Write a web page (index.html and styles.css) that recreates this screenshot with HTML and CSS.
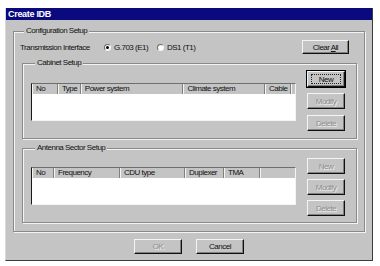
FILE: index.html
```html
<!DOCTYPE html>
<html lang="en">
<head>
  <meta charset="UTF-8" />
  <title>Create IDB</title>
  <link rel="stylesheet" href="styles.css">
</head>
<body>
  <div class="window">
    <div class="titlebar">Create IDB</div>

    <div class="content">
      <fieldset class="group config">
        <legend>Configuration Setup</legend>

        <div class="iface-row">
          <span class="iface-label">Transmission Interface</span>
          <label class="radio-opt"><span class="radio checked"></span>G.703 (E1)</label>
          <label class="radio-opt"><span class="radio"></span>DS1 (T1)</label>
          <button class="btn clear-btn"><span>Clear <u>A</u>ll</span></button>
        </div>

        <fieldset class="group sub cabinet">
          <legend>Cabinet Setup</legend>
          <div class="list">
            <div class="list-head">
              <span class="col" style="width: 26px">No</span>
              <span class="col" style="width: 23px">Type</span>
              <span class="col" style="width: 103px">Power system</span>
              <span class="col" style="width: 82px">Climate system</span>
              <span class="col" style="width: 26px">Cable</span>
              <span class="col fill"></span>
            </div>
          </div>
          <div class="side-btns">
            <button class="btn default"><span class="focus">New</span></button>
            <button class="btn" disabled>Modify</button>
            <button class="btn" disabled>Delete</button>
          </div>
        </fieldset>

        <fieldset class="group sub antenna">
          <legend>Antenna Sector Setup</legend>
          <div class="list">
            <div class="list-head">
              <span class="col" style="width: 22px">No</span>
              <span class="col" style="width: 66px">Frequency</span>
              <span class="col" style="width: 65px">CDU type</span>
              <span class="col" style="width: 39px">Duplexer</span>
              <span class="col" style="width: 36px">TMA</span>
              <span class="col fill"></span>
            </div>
          </div>
          <div class="side-btns">
            <button class="btn" disabled>New</button>
            <button class="btn" disabled>Modify</button>
            <button class="btn" disabled>Delete</button>
          </div>
        </fieldset>
      </fieldset>

      <div class="footer">
        <button class="btn" disabled>OK</button>
        <button class="btn">Cancel</button>
      </div>
    </div>
  </div>
</body>
</html>
```

FILE: styles.css
```css
* {
  box-sizing: border-box;
}
body {
  margin: 0;
  padding: 8px 0 0 5px;
  background: #fff;
  font-family: "Liberation Sans", Arial, sans-serif;
  font-size: 8px;
  letter-spacing: -0.5px;
  color: #111;
}
.window {
  width: 368px;
  height: 253px;
  background: #c4c4c4;
  border-left: 1px solid #d8d8d8;
  border-right: 1px solid #3c3c3c;
  border-bottom: 1px solid #3c3c3c;
}
.titlebar {
  height: 12px;
  line-height: 12px;
  padding-left: 2px;
  background: #0a0a7e;
  color: #fff;
  font-weight: bold;
  font-size: 9px;
  letter-spacing: -0.3px;
}
.content {
  padding: 6px 7px 0 7px;
}
.group {
  margin: 0;
  padding: 0;
  border: 1px solid #8a8a8a;
  box-shadow: inset 1px 1px 0 #f4f4f4, 1px 1px 0 #f4f4f4;
}
.group legend {
  margin-left: 4px;
  padding: 0 2px;
  line-height: 10px;
  background: #c4c4c4;
}
.config {
  height: 206px;
  padding: 0 7px 0 6px;
}
.iface-row {
  display: flex;
  align-items: center;
  height: 14px;
  margin-top: 4px;
}
.iface-label {
  width: 84px;
}
.radio-opt {
  display: flex;
  align-items: center;
  gap: 3px;
  width: 53px;
}
.radio {
  width: 7px;
  height: 7px;
  border-radius: 50%;
  background: #fff;
  border: 1px solid;
  border-color: #6a6a6a #f4f4f4 #f4f4f4 #6a6a6a;
  display: flex;
  align-items: center;
  justify-content: center;
}
.radio.checked::after {
  content: "";
  width: 3px;
  height: 3px;
  border-radius: 50%;
  background: #000;
}
.btn {
  width: 38px;
  height: 16px;
  padding: 0;
  font: inherit;
  letter-spacing: inherit;
  color: #111;
  background: #c4c4c4;
  border: 1px solid;
  border-color: #f4f4f4 #101010 #101010 #f4f4f4;
  box-shadow: inset -1px -1px 0 #808080;
  display: flex;
  align-items: center;
  justify-content: center;
}
.btn:disabled {
  color: #8e8e8e;
  text-shadow: 1px 1px 0 #f0f0f0;
}
.clear-btn {
  width: 47px;
  height: 14px;
  margin-left: auto;
  margin-right: 8px;
}
.btn.default {
  outline: 1px solid #000;
}
.focus {
  display: flex;
  align-items: center;
  justify-content: center;
  width: 30px;
  height: 10px;
  border: 1px dotted #222;
}
.sub {
  margin-left: 2px;
  display: grid;
  grid-template-columns: 265px 38px;
  column-gap: 11px;
  padding: 0 0 0 8px;
}
.cabinet {
  height: 81px;
  margin-top: 4px;
}
.antenna {
  height: 80px;
  margin-top: 4px;
}
.list {
  background: #fff;
  border: 1px solid;
  border-color: #6e6e6e #f4f4f4 #f4f4f4 #1a1a1a;
  height: 38px;
}
.cabinet .list {
  margin-top: 15px;
}
.antenna .list {
  margin-top: 14px;
}
.list-head {
  display: flex;
  height: 10px;
  background: #c4c4c4;
}
.col {
  line-height: 10px;
  padding-left: 4px;
  border-right: 1px solid #808080;
  box-shadow: inset 1px 0 0 #f4f4f4;
  white-space: nowrap;
  overflow: hidden;
}
.col.fill {
  flex: 1;
  border-right: none;
}
.side-btns {
  display: flex;
  flex-direction: column;
  gap: 6px;
  margin-top: 3px;
}
.antenna .side-btns {
  gap: 5px;
  margin-top: 5px;
}
.footer {
  display: flex;
  justify-content: center;
  gap: 14px;
  margin-top: 7px;
}
.footer .btn {
  width: 48px;
  height: 15px;
}
```
